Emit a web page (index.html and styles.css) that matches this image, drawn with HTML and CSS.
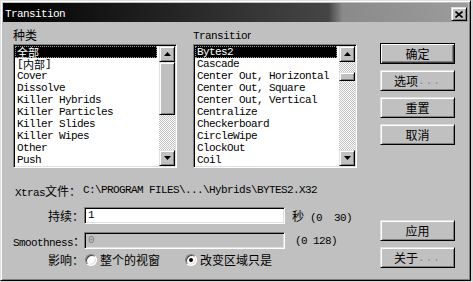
FILE: index.html
```html
<!DOCTYPE html>
<html lang="zh">
<head>
    <meta charset="UTF-8">
    <title>Transition</title>
    <link rel="stylesheet" href="styles.css">
</head>
<body>
    <div class="window">
        <!-- title bar -->
        <div class="titlebar">
            <span class="title">Transition</span>
            <span class="close raised">
                <svg width="8" height="7" viewBox="0 0 8 7"><path d="M0.5 0.5 L7.5 6.5 M7.5 0.5 L0.5 6.5" stroke="#000" stroke-width="1.6"/></svg>
            </span>
        </div>

        <div class="body">
            <div class="main">
                <div class="lists">
                    <!-- categories -->
                    <div class="group">
                        <div class="caption cjk">种类</div>
                        <div class="listbox">
                            <ul class="items">
                                <li class="selected"><span class="cjk">全部</span></li>
                                <li>[<span class="cjk">内部</span>]</li>
                                <li>Cover</li>
                                <li>Dissolve</li>
                                <li>Killer Hybrids</li>
                                <li>Killer Particles</li>
                                <li>Killer Slides</li>
                                <li>Killer Wipes</li>
                                <li>Other</li>
                                <li>Push</li>
                            </ul>
                            <div class="scrollbar">
                                <div class="sb-btn raised"><svg width="7" height="4" viewBox="0 0 7 4"><path d="M3.5 0 L7 4 L0 4 Z" fill="#000"/></svg></div>
                                <div class="thumb raised thumb-long"></div>
                                <div class="track"></div>
                                <div class="sb-btn raised"><svg width="7" height="4" viewBox="0 0 7 4"><path d="M0 0 L7 0 L3.5 4 Z" fill="#000"/></svg></div>
                            </div>
                        </div>
                    </div>

                    <!-- transitions -->
                    <div class="group">
                        <div class="caption"><span class="clip">Transition</span></div>
                        <div class="listbox">
                            <ul class="items">
                                <li class="selected">Bytes2</li>
                                <li>Cascade</li>
                                <li>Center Out, Horizontal</li>
                                <li>Center Out, Square</li>
                                <li>Center Out, Vertical</li>
                                <li>Centralize</li>
                                <li>Checkerboard</li>
                                <li>CircleWipe</li>
                                <li>ClockOut</li>
                                <li>Coil</li>
                            </ul>
                            <div class="scrollbar">
                                <div class="sb-btn raised"><svg width="7" height="4" viewBox="0 0 7 4"><path d="M3.5 0 L7 4 L0 4 Z" fill="#000"/></svg></div>
                                <div class="track-top"></div>
                                <div class="thumb raised thumb-short"></div>
                                <div class="track"></div>
                                <div class="sb-btn raised"><svg width="7" height="4" viewBox="0 0 7 4"><path d="M0 0 L7 0 L3.5 4 Z" fill="#000"/></svg></div>
                            </div>
                        </div>
                    </div>
                </div>

                <div class="fields">
                    <div class="row xtras">
                        <span class="key">Xtras<span class="cjk">文件：</span></span>
                        <span class="path">C:\PROGRAM FILES\...\Hybrids\BYTES2.X32</span>
                    </div>
                    <div class="row duration">
                        <span class="label"><span class="cjk">持续：</span></span>
                        <div class="input">1</div>
                        <span class="unit"><span class="cjk">秒</span> (0  30)</span>
                    </div>
                    <div class="row smooth">
                        <span class="label">Smoothness<span class="cjk">：</span></span>
                        <div class="input disabled">0</div>
                        <span class="range">(0 128)</span>
                    </div>
                    <div class="row radios">
                        <span class="label"><span class="cjk">影响：</span></span>
                        <label class="radio"><span class="dot"></span><span class="cjk">整个的视窗</span></label>
                        <label class="radio"><span class="dot checked"></span><span class="cjk">改变区域只是</span></label>
                    </div>
                </div>
            </div>

            <div class="side">
                <div class="btn-group">
                    <div class="btn raised default"><span class="cjk">确定</span></div>
                    <div class="btn raised"><span class="cjk">选项</span><span class="dots">...</span></div>
                    <div class="btn raised"><span class="cjk">重置</span></div>
                    <div class="btn raised"><span class="cjk">取消</span></div>
                </div>
                <div class="btn-group bottom">
                    <div class="btn raised"><span class="cjk">应用</span></div>
                    <div class="btn raised"><span class="cjk">关于</span><span class="dots">...</span></div>
                </div>
            </div>
        </div>
    </div>
</body>
</html>
```

FILE: styles.css
```css
html, body {
    margin: 0;
    padding: 0;
}
body {
    background-color: #d8d8d8;
    font-family: "Liberation Mono", "Noto Sans CJK SC", monospace;
    font-size: 11px;
    letter-spacing: -0.6px;
    color: #000;
}
.cjk {
    font-family: "Noto Sans CJK SC", sans-serif;
    font-size: 12px;
    letter-spacing: 0;
}
.raised {
    background-color: #c0c0c0;
    box-sizing: border-box;
    border: 1px solid;
    border-color: #dfdfdf #000 #000 #dfdfdf;
    box-shadow: inset 1px 1px #fff, inset -1px -1px #808080;
}
.window {
    width: 471px;
    height: 281px;
    box-sizing: border-box;
    background-color: #c0c0c0;
    border: 1px solid;
    border-color: #dfdfdf #000 #000 #dfdfdf;
    box-shadow: inset 1px 1px #fff, inset -1px -1px #808080;
    padding: 2px;
    display: flex;
    flex-direction: column;
}
.titlebar {
    height: 19px;
    flex: none;
    display: flex;
    align-items: flex-start;
    background: linear-gradient(to right, #000 0%, #1e1e1e 30%, #3c3c3c 60%, #454545 70%, #8a8a8a 73%, #9c9c9c 100%);
}
.title {
    color: #fff;
    padding: 5px 0 0 2px;
    line-height: 12px;
}
.close {
    margin: 4px 1px 0 auto;
    width: 16px;
    height: 14px;
    display: flex;
    align-items: center;
    justify-content: center;
}
.body {
    flex: 1;
    display: flex;
    padding: 5px 13px 10px 10px;
}
.main {
    width: 344px;
}
.lists {
    display: flex;
    gap: 16px;
}
.group {
    width: 164px;
}
.caption {
    height: 17px;
    line-height: 15px;
}
.caption .clip {
    display: inline-block;
    width: 58px;
    overflow: hidden;
    white-space: nowrap;
    vertical-align: top;
    padding-top: 2px;
}
.listbox {
    height: 124px;
    box-sizing: border-box;
    display: flex;
    border: 1px solid;
    border-color: #808080 #fff #fff #808080;
    box-shadow: inset 1px 1px #000, inset -1px -1px #dfdfdf;
    padding: 1px;
    background-color: #fff;
}
.items {
    flex: 1;
    list-style: none;
    margin: 0;
    padding: 0;
    overflow: hidden;
}
.items li {
    height: 12px;
    line-height: 12px;
    padding-left: 2px;
    margin-right: 2px;
    white-space: nowrap;
    overflow: hidden;
}
.items li .cjk {
    display: inline-block;
    height: 12px;
    font-size: 11px;
    line-height: 12px;
    vertical-align: top;
    overflow: hidden;
}
.items li.selected {
    background-color: #000;
    color: #fff;
    outline: 1px dotted #9a9a9a;
    outline-offset: -1px;
}
.scrollbar {
    width: 16px;
    display: flex;
    flex-direction: column;
    background: repeating-conic-gradient(#c0c0c0 0 25%, #fff 0 50%) 0 0 / 2px 2px;
}
.sb-btn {
    height: 16px;
    flex: none;
    display: flex;
    align-items: center;
    justify-content: center;
}
.thumb {
    flex: none;
}
.thumb-long {
    height: 53px;
}
.thumb-short {
    height: 9px;
}
.track-top {
    height: 10px;
}
.track {
    flex: 1;
}
.fields {
    display: flex;
    flex-direction: column;
}
.row {
    display: flex;
    align-items: center;
}
.xtras {
    margin-top: 14px;
    height: 16px;
}
.key {
    width: 68px;
    padding-left: 2px;
    white-space: nowrap;
}
.path {
    white-space: nowrap;
}
.duration {
    margin-top: 9px;
}
.smooth {
    margin-top: 8px;
}
.radios {
    margin-top: 2px;
    height: 17px;
}
.label {
    width: 71px;
    text-align: right;
    white-space: nowrap;
}
.input {
    width: 201px;
    height: 17px;
    box-sizing: border-box;
    border: 1px solid;
    border-color: #808080 #fff #fff #808080;
    box-shadow: inset 1px 1px #000, inset -1px -1px #dfdfdf;
    background-color: #fff;
    padding: 0 3px;
    line-height: 15px;
}
.input.disabled {
    background-color: #c0c0c0;
    color: #808080;
}
.unit {
    margin-left: 7px;
    white-space: pre;
}
.range {
    margin-left: 10px;
    white-space: pre;
}
.radio {
    display: flex;
    align-items: center;
    margin-left: 1px;
    margin-right: 24px;
}
.dot {
    width: 12px;
    height: 12px;
    box-sizing: border-box;
    border-radius: 50%;
    border: 1px solid;
    border-color: #808080 #fff #fff #808080;
    box-shadow: inset 1px 1px #404040, inset -1px -1px #dfdfdf;
    background-color: #fff;
    margin-right: 3px;
    display: flex;
    align-items: center;
    justify-content: center;
}
.dot.checked::after {
    content: "";
    width: 4px;
    height: 4px;
    border-radius: 50%;
    background-color: #000;
}
.side {
    width: 75px;
    margin-left: 23px;
    padding-top: 16px;
    display: flex;
    flex-direction: column;
}
.btn-group {
    display: flex;
    flex-direction: column;
    gap: 6px;
}
.btn-group.bottom {
    margin-top: auto;
}
.btn {
    height: 21px;
    display: flex;
    align-items: center;
    justify-content: center;
}
.btn.default {
    border-color: #000;
    box-shadow: inset 1px 1px #fff, inset -1px -1px #404040, inset -2px -2px #808080;
}
.dots {
    color: #8a8a8a;
    letter-spacing: 1px;
}
```
